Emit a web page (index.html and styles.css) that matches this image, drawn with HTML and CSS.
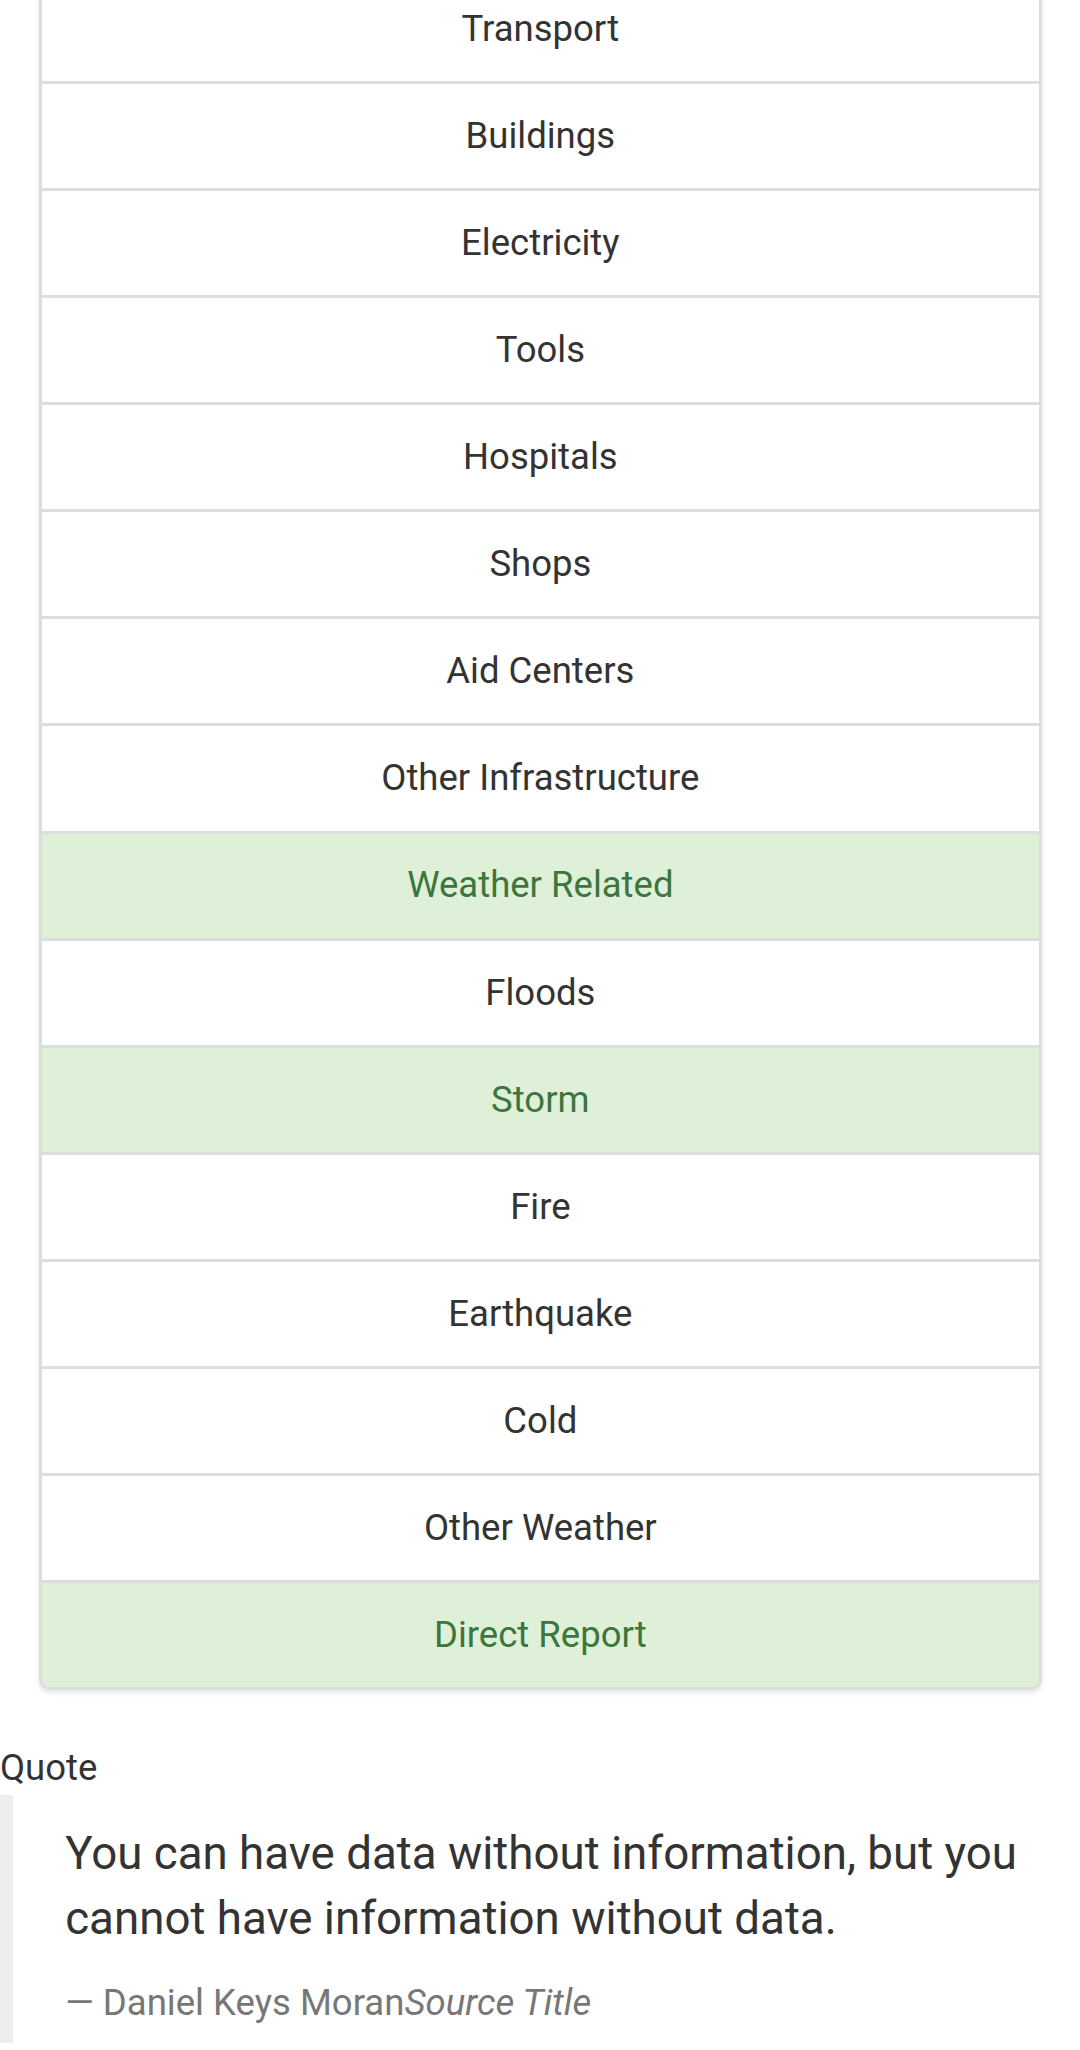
FILE: index.html
```html
<!DOCTYPE html>
<html lang="en">
<head>
<meta charset="utf-8">
<title>Categories</title>
<link rel="stylesheet" href="styles.css">
</head>
<body>
<div class="container">
  <ul class="list-group">
    <li class="item">Transport</li>
    <li class="item">Buildings</li>
    <li class="item">Electricity</li>
    <li class="item">Tools</li>
    <li class="item">Hospitals</li>
    <li class="item">Shops</li>
    <li class="item">Aid Centers</li>
    <li class="item">Other Infrastructure</li>
    <li class="item success">Weather Related</li>
    <li class="item">Floods</li>
    <li class="item success">Storm</li>
    <li class="item">Fire</li>
    <li class="item">Earthquake</li>
    <li class="item">Cold</li>
    <li class="item">Other Weather</li>
    <li class="item success last">Direct Report</li>
  </ul>
</div>
<div class="quote-section">
  <div class="quote-label">Quote</div>
  <blockquote class="quote">
    <p class="quote-text">You can have data without information, but you cannot have information without data.</p>
    <footer class="quote-footer">Daniel Keys Moran<cite class="quote-cite" title="Source Title">Source Title</cite></footer>
  </blockquote>
</div>
</body>
</html>
```

FILE: styles.css
```css
html, body {
  margin: 0;
  padding: 0;
  background: #fff;
}
body {
  font-family: Roboto, "Noto Sans", "Liberation Sans", sans-serif;
  font-size: 36.5px;
  line-height: 1.42857;
  color: #333;
}
.container {
  padding: 0 38.5px 0 39.2px;
  margin-top: -26.1px;
}
.list-group {
  list-style: none;
  margin: 0 0 52.2px 0;
  padding: 0;
  border-radius: 0 0 10.5px 10.5px;
  box-shadow: 0 3px 5px rgba(0, 0, 0, 0.1);
}
.item {
  display: block;
  text-align: center;
  background: #fff;
  border: 3px solid #ddd;
  margin-bottom: -3px;
  padding: 25.93px 39.2px;
  line-height: 52.24px;
}
.item.success {
  background: #dff0d8;
  color: #3c763d;
}
.item.last {
  margin-bottom: 0;
  border-radius: 0 0 10.5px 10.5px;
}
.quote-section {
  color: #333;
}
.quote-label {
  line-height: 52.2px;
}
.quote {
  margin: 0 0 52px 0;
  padding: 26.1px 52.2px 13px 52.2px;
  border-left: 13px solid #eee;
  font-size: 45.7px;
  line-height: 1.42857;
}
.quote-text {
  margin: 0 0 26.1px 0;
}
.quote-footer {
  display: block;
  font-size: 80%;
  line-height: 1.42857;
  color: #777;
}
.quote-footer::before {
  content: "\2014\00A0";
}
.quote-cite {
  font-style: italic;
}
```
